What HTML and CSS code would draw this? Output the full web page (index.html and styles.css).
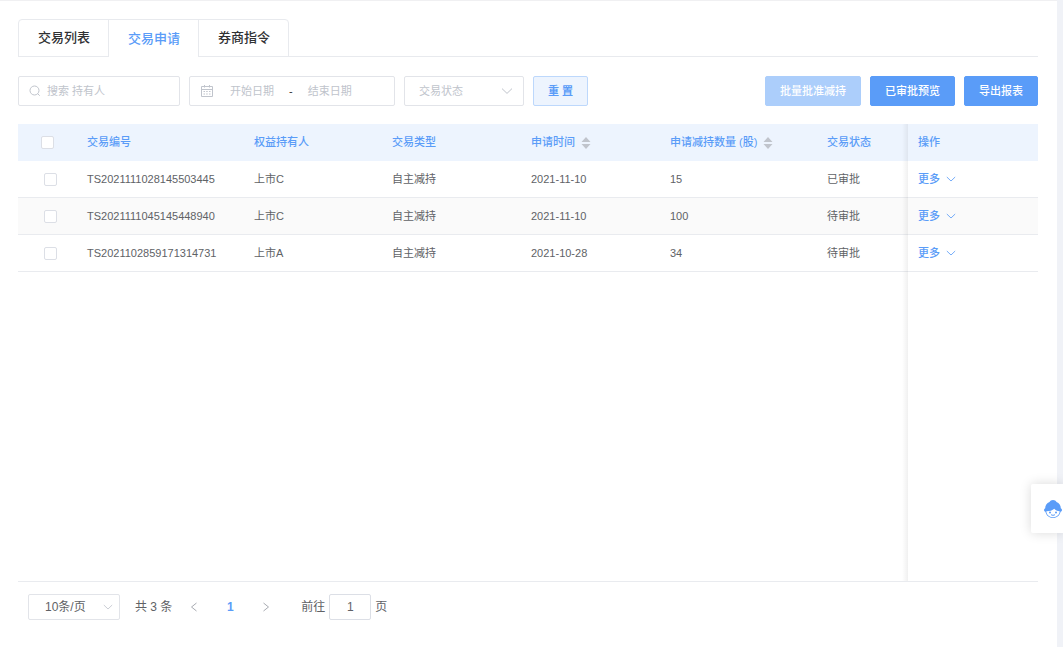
FILE: index.html
```html
<!DOCTYPE html>
<html lang="zh-CN">
<head>
<meta charset="utf-8">
<title>交易申请</title>
<link rel="stylesheet" href="styles.css">
</head>
<body>
<svg class="defs" aria-hidden="true">
  <symbol id="down" viewBox="0 0 12 12"><path d="M1 3.600 6 8.400l5-4.800"/></symbol>
  <symbol id="sort" viewBox="0 0 10 14"><path d="M5 1 9.500 6H.5zM5 13 .5 8h9z"/></symbol>
</svg>
<main class="page">
  <nav class="tabs">
    <div class="tab-list" role="tablist">
      <button class="tab" role="tab" aria-selected="false">交易列表</button>
      <button class="tab active" role="tab" aria-selected="true">交易申请</button>
      <button class="tab" role="tab" aria-selected="false">券商指令</button>
    </div>
  </nav>

  <form class="toolbar">
    <label class="field search">
      <svg class="icon" width="12" height="12" viewBox="0 0 12 12"><circle cx="5.500" cy="5.500" r="4.500"/><path d="m8.700 8.700 2 2"/></svg>
      <input type="text" placeholder="搜索 持有人" aria-label="搜索 持有人">
    </label>
    <div class="field dates">
      <svg class="icon" width="12" height="12" viewBox="0 0 12 12"><path d="M.5 1.500h11v10H.5zM.5 4.500h11M3.500 0v2.500M8.500 0v2.500M2.500 6.500h1.500M5.200 6.500h1.500M8 6.500h1.500M2.500 9h1.500M5.200 9h1.500M8 9h1.500"/></svg>
      <input type="text" placeholder="开始日期" aria-label="开始日期">
      <span class="dash">-</span>
      <input type="text" placeholder="结束日期" aria-label="结束日期">
    </div>
    <div class="field status">
      <select aria-label="交易状态"><option>交易状态</option><option>已审批</option><option>待审批</option></select>
      <svg class="icon" width="12" height="12"><use href="#down"/></svg>
    </div>
    <button type="button" class="btn plain">重 置</button>
    <div class="actions">
      <button type="button" class="btn primary" disabled>批量批准减持</button>
      <button type="button" class="btn primary">已审批预览</button>
      <button type="button" class="btn primary">导出报表</button>
    </div>
  </form>

  <section class="table-area">
    <table>
      <colgroup><col class="c-check"><col class="c-id"><col class="c-holder"><col class="c-type"><col class="c-time"><col class="c-amount"><col><col class="c-op"></colgroup>
      <thead>
        <tr>
          <th class="check"><input type="checkbox" aria-label="全选"></th>
          <th>交易编号</th>
          <th>权益持有人</th>
          <th>交易类型</th>
          <th>申请时间<svg class="sort" width="10" height="14"><use href="#sort"/></svg></th>
          <th>申请减持数量 (股)<svg class="sort" width="10" height="14"><use href="#sort"/></svg></th>
          <th>交易状态</th>
          <th>操作</th>
        </tr>
      </thead>
      <tbody>
        <tr>
          <td class="check"><input type="checkbox" aria-label="选择 TS2021111028145503445"></td>
          <td>TS2021111028145503445</td><td>上市C</td><td>自主减持</td><td>2021-11-10</td><td>15</td><td>已审批</td>
          <td><button class="more">更多<svg class="icon" width="10" height="10"><use href="#down"/></svg></button></td>
        </tr>
        <tr>
          <td class="check"><input type="checkbox" aria-label="选择 TS2021111045145448940"></td>
          <td>TS2021111045145448940</td><td>上市C</td><td>自主减持</td><td>2021-11-10</td><td>100</td><td>待审批</td>
          <td><button class="more">更多<svg class="icon" width="10" height="10"><use href="#down"/></svg></button></td>
        </tr>
        <tr>
          <td class="check"><input type="checkbox" aria-label="选择 TS2021102859171314731"></td>
          <td>TS2021102859171314731</td><td>上市A</td><td>自主减持</td><td>2021-10-28</td><td>34</td><td>待审批</td>
          <td><button class="more">更多<svg class="icon" width="10" height="10"><use href="#down"/></svg></button></td>
        </tr>
      </tbody>
    </table>
  </section>

  <footer class="pagination">
    <div class="field size">
      <select aria-label="每页条数"><option>10条/页</option><option>20条/页</option></select>
      <svg class="icon" width="10" height="10"><use href="#down"/></svg>
    </div>
    <span class="total">共 3 条</span>
    <div class="pager">
      <button aria-label="上一页"><svg class="icon" width="10" height="12" viewBox="0 0 10 12"><path d="M7.500 2 2.500 6l5 4"/></svg></button>
      <button class="current">1</button>
      <button aria-label="下一页"><svg class="icon" width="10" height="12" viewBox="0 0 10 12"><path d="m2.500 2 5 4-5 4"/></svg></button>
    </div>
    <label class="jump">前往<input type="text" value="1">页</label>
  </footer>
</main>

<button class="support" aria-label="在线客服">
  <svg width="18" height="20" viewBox="0 0 18 20">
    <path fill="#5a9cf8" d="M5.500 3C6.500.3 11.500.3 12.500 3c2.800 1 4.300 3.500 4.300 6.300.8.300 1.200.9 1.200 1.700 0 .9-.5 1.500-1.400 1.700C15.800 16.500 12.700 19 9 19s-6.800-2.500-7.600-6.300C.5 12.500 0 11.900 0 11c0-.8.4-1.400 1.200-1.700C1.200 6.500 2.700 4 5.500 3z"/>
    <path fill="#fff" d="M2.300 12.200c3.200.1 6-.7 8-2.500 1.200 1.500 2.900 2.300 5.400 2.500-.3 3.500-3 6-6.700 6s-6.400-2.500-6.700-6z"/>
    <circle cx="6" cy="13.500" r="1" fill="#5a9cf8"/><circle cx="12" cy="13.500" r="1" fill="#5a9cf8"/>
    <path d="M7 15.600c1 .9 3 .9 4 0" fill="none" stroke="#5a9cf8"/>
  </svg>
</button>
</body>
</html>
```
FILE: styles.css
```css
* {
  box-sizing: border-box;
}

body {
  margin: 0;
  padding-right: 6px;
  background: #f0f2f7;
  color: #606266;
  font: 11px/16px "Liberation Sans", "Noto Sans CJK SC", sans-serif;
}

button,
input,
select {
  margin: 0;
  padding: 0;
  border: 0;
  background: none;
  color: inherit;
  font: inherit;
}

.defs {
  display: none;
}

.page {
  display: flex;
  flex-direction: column;
  min-height: 100vh;
  padding: 18px 19px 27px 18px;
  border-top: 1px solid #f0f0f2;
  background: #fff;
}

.icon {
  flex: none;
  fill: none;
  stroke: #c0c4cc;
}

/* Tabs */
.tabs {
  display: flex;
  border-bottom: 1px solid #e8eaee;
}

.tab-list {
  display: flex;
  margin-bottom: -1px;
  border: 1px solid #e8eaee;
  border-radius: 4px 4px 0 0;
}

.tab {
  height: 36px;
  padding: 0 18px 0 19px;
  border-right: 1px solid #e8eaee;
  color: #303133;
  font-size: 13px;
  font-weight: 500;
}

.tab:last-child {
  border-right: 0;
}

.tab.active {
  height: 37px;
  margin-bottom: -1px;
  background: #fff;
  color: #5a9cf8;
}

/* Filters */
.toolbar {
  display: flex;
  gap: 9px;
  margin: 19px 0 18px;
}

.field {
  display: flex;
  align-items: center;
  height: 30px;
  border: 1px solid #e2e4e9;
  border-radius: 2px;
}

.field input {
  min-width: 0;
  outline: 0;
}

.field input::placeholder {
  color: #c0c4cc;
  opacity: 1;
}

.search {
  width: 162px;
  padding: 0 10px;
  gap: 6px;
}

.search input {
  flex: 1;
}

.dates {
  width: 206px;
  padding: 0 11px;
}

.dates input {
  width: 74px;
  text-align: center;
}

.dates .icon {
  margin-right: 2px;
}

.dash {
  text-align: center;
  color: #303133;
}

.status,
.size {
  position: relative;
}

.field select {
  width: 100%;
  height: 100%;
  appearance: none;
}

.field select + .icon {
  position: absolute;
  right: 10px;
  pointer-events: none;
}

.status {
  width: 120px;
  color: #c0c4cc;
}

.status select {
  padding-left: 14px;
}

.btn {
  height: 30px;
  padding: 0 14px;
  border: 1px solid #5a9cf8;
  border-radius: 2px;
  font-weight: 500;
}

.plain {
  border-color: #bdd8fc;
  background: #edf4fe;
  color: #5a9cf8;
  font-weight: 700;
}

.primary {
  background: #5a9cf8;
  color: #fff;
}

.primary:disabled {
  border-color: #accefb;
  background: #accefb;
}

.actions {
  display: flex;
  gap: 9px;
  margin-left: auto;
}

/* Table */
.table-area {
  position: relative;
  flex: 1;
  border-bottom: 1px solid #e9ebef;
}

.table-area::after {
  content: "";
  position: absolute;
  top: 0;
  right: 130px;
  bottom: 0;
  width: 6px;
  background: linear-gradient(to right, transparent, rgba(0, 0, 0, 0.06));
}

table {
  width: 100%;
  table-layout: fixed;
  border-collapse: separate;
  border-spacing: 0;
}

.c-check {
  width: 60px;
}

.c-id {
  width: 167px;
}

.c-holder {
  width: 138px;
}

.c-type,
.c-time {
  width: 139px;
}

.c-amount {
  width: 157px;
}

.c-op {
  width: 129px;
}

th,
td {
  height: 37px;
  padding: 0 9px;
  border-bottom: 1px solid #e9ebef;
  text-align: left;
  white-space: nowrap;
}

th {
  border-color: #edf4fe;
  background: #edf4fe;
  color: #5a9cf8;
  font-weight: 500;
}

tbody tr:nth-child(even) {
  background: #fafafa;
}

.check input {
  display: block;
  width: 13px;
  height: 13px;
  margin-left: 17px;
  border: 1px solid #dcdfe6;
  border-radius: 2px;
  background: #fff;
  appearance: none;
}

th.check input {
  margin-left: 14px;
}

.check input:checked {
  border-color: #5a9cf8;
  background: #5a9cf8;
}

.sort {
  margin-left: 6px;
  vertical-align: middle;
  fill: #c0c4cc;
}

.more {
  display: flex;
  align-items: center;
  gap: 6px;
  color: #5a9cf8;
  font-weight: 500;
}

.more .icon {
  stroke: #5a9cf8;
}

/* Pagination */
.pagination {
  display: flex;
  align-items: center;
  padding: 12px 0 0 10px;
  font-size: 12px;
}

.size {
  width: 92px;
  height: 26px;
}

.size select {
  padding-left: 16px;
}

.field.size select + .icon {
  right: 6px;
}

.total {
  margin-left: 15px;
}

.pager {
  display: flex;
  margin-left: 4px;
}

.pager button {
  display: flex;
  align-items: center;
  justify-content: center;
  width: 36px;
  height: 26px;
}

.pager .icon {
  stroke: #a8abb2;
}

.pager .current {
  color: #5a9cf8;
  font-weight: 700;
}

.jump {
  display: flex;
  align-items: center;
  gap: 4px;
  margin-left: 17px;
}

.jump input {
  width: 42px;
  height: 26px;
  border: 1px solid #dcdfe6;
  border-radius: 2px;
  text-align: center;
}

/* Floating help */
.support {
  position: fixed;
  right: 0;
  bottom: 114px;
  display: flex;
  align-items: center;
  width: 32px;
  height: 49px;
  padding-left: 13px;
  border-radius: 2px 0 0 2px;
  background: #fff;
  box-shadow: 0 0 12px rgba(0, 0, 0, 0.15);
}
```
